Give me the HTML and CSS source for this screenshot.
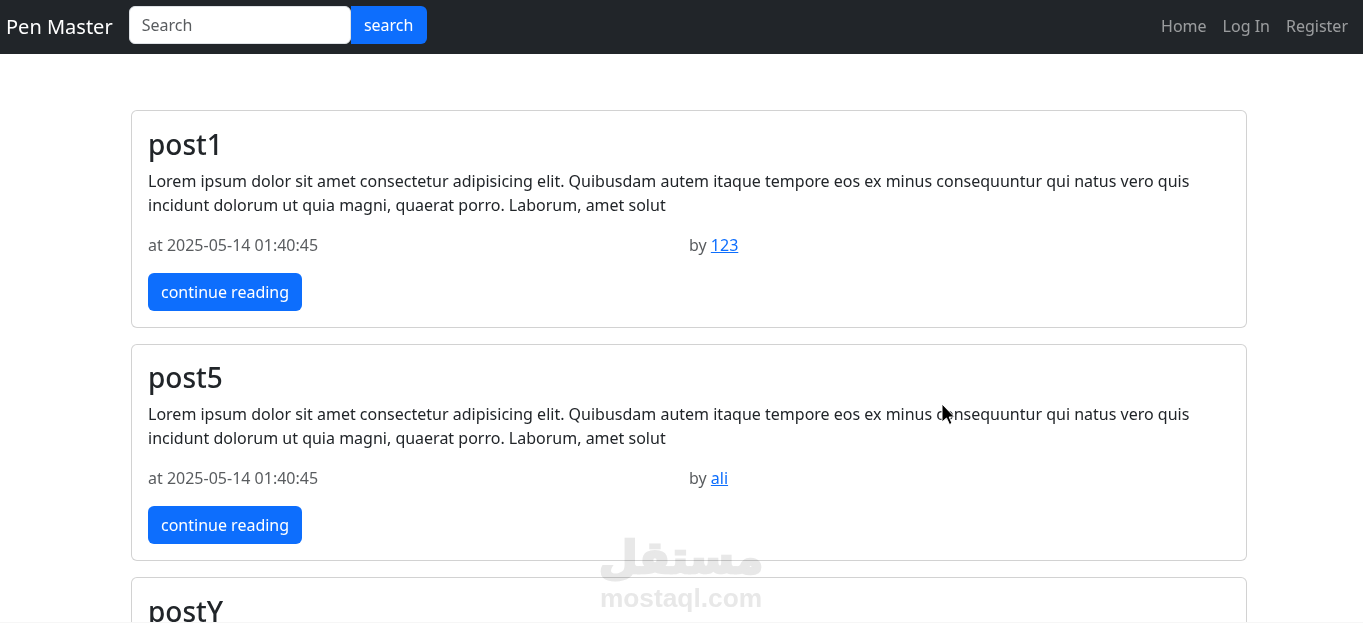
FILE: index.html
```html
<!DOCTYPE html>
<html lang="en">
<head>
<meta charset="utf-8">
<title>Pen Master</title>
<link rel="stylesheet" href="styles.css">
</head>
<body>
<nav class="navbar">
  <a class="brand" href="#">Pen Master</a>
  <form class="search">
    <input class="search-input" type="text" placeholder="Search">
    <button class="btn search-btn" type="button">search</button>
  </form>
  <ul class="nav-links">
    <li><a href="#">Home</a></li>
    <li><a href="#">Log In</a></li>
    <li><a href="#">Register</a></li>
  </ul>
</nav>
<main class="posts">
  <article class="card">
    <h3 class="card-title">post1</h3>
    <p class="card-text">Lorem ipsum dolor sit amet consectetur adipisicing elit. Quibusdam autem itaque tempore eos ex minus consequuntur qui natus vero quis incidunt dolorum ut quia magni, quaerat porro. Laborum, amet solut</p>
    <div class="meta"><span>at 2025-05-14 01:40:45</span><span>by <a href="#">123</a></span></div>
    <a class="btn" href="#">continue reading</a>
  </article>
  <article class="card">
    <h3 class="card-title">post5</h3>
    <p class="card-text">Lorem ipsum dolor sit amet consectetur adipisicing elit. Quibusdam autem itaque tempore eos ex minus consequuntur qui natus vero quis incidunt dolorum ut quia magni, quaerat porro. Laborum, amet solut</p>
    <div class="meta"><span>at 2025-05-14 01:40:45</span><span>by <a href="#">ali</a></span></div>
    <a class="btn" href="#">continue reading</a>
  </article>
  <article class="card">
    <h3 class="card-title">postY</h3>
    <p class="card-text">Lorem ipsum dolor sit amet consectetur adipisicing elit.</p>
  </article>
</main>
<div class="watermark">
  <div class="wm-ar" lang="ar" dir="rtl">مستقل</div>
  <div class="wm-en">mostaql.com</div>
</div>
<div class="edge-line"></div>
<svg class="cursor" width="15" height="24" viewBox="0 0 15 24"><path d="M1 1 L1 19 L5.5 15 L8.5 21.5 L11 20.3 L8.2 14 L13.5 14 Z" fill="#000" stroke="#fff" stroke-width="1"/></svg>
</body>
</html>
```
FILE: styles.css
```css
* { box-sizing: border-box; }
html, body { margin: 0; height: 623px; overflow: hidden; }
body {
  font-family: "Noto Sans", sans-serif;
  font-size: 16px;
  line-height: 24px;
  color: #212529;
  background: #fff;
}
.navbar {
  display: flex;
  align-items: center;
  height: 54px;
  padding: 0 6px;
  background: #212529;
}
.brand {
  font-size: 20px;
  line-height: 30px;
  color: #fff;
  text-decoration: none;
  margin-right: 16px;
}
.search { display: flex; margin-bottom: 4px; }
.search-input {
  width: 222px;
  height: 38px;
  padding: 6px 12px;
  font: inherit;
  color: #212529;
  background: #fff;
  border: 1px solid #dee2e6;
  border-radius: 6px;
  outline: 0;
}
.search-input::placeholder { color: #595c5f; opacity: 1; }
.btn {
  display: inline-block;
  height: 38px;
  padding: 6px 13px;
  font: inherit;
  line-height: 26px;
  color: #fff;
  background: #0d6efd;
  border: 0;
  border-radius: 6px;
  text-decoration: none;
}
.search-btn { width: 76px; padding: 0; border-radius: 0 6px 6px 0; }
.nav-links {
  display: flex;
  gap: 16px;
  margin: 0 9px 2px auto;
  padding: 0;
  list-style: none;
}
.nav-links a { color: rgba(255,255,255,.55); text-decoration: none; }
.posts {
  width: 1116px;
  margin: 56.3px 0 0 131px;
  display: flex;
  flex-direction: column;
  gap: 16px;
}
.card {
  border: 1px solid rgba(0,0,0,.175);
  border-radius: 6px;
  padding: 16px;
  height: 217.6px;
  flex: none;
  background: #fff;
}
.card-title {
  margin: 0.3px 0 7.7px;
  font-size: 28px;
  font-weight: 500;
  line-height: 33.6px;
}
.card-text { margin: 0 0 16px; }
.meta { display: flex; margin-bottom: 16px; color: rgba(33,37,41,.75); }
.meta span { flex: 0 0 50%; }
.meta a { color: #0d6efd; }
.watermark {
  position: absolute;
  left: 560px;
  top: 530px;
  width: 242px;
  text-align: center;
  mix-blend-mode: multiply;
  color: #e8e8e8;
  font-weight: 700;
  pointer-events: none;
}
.wm-ar {
  font-family: "DejaVu Sans", sans-serif;
  font-size: 45px;
  line-height: 55px;
  -webkit-text-stroke: 2.5px #e8e8e8;
}
.wm-en { font-family: "Liberation Sans", sans-serif; font-size: 26.3px; line-height: 28px; margin-top: -1px; }
.edge-line { position: absolute; left: 0; right: 0; top: 622px; height: 1px; background: #f6f6f6; }
.cursor { position: absolute; left: 941px; top: 403px; }
```
